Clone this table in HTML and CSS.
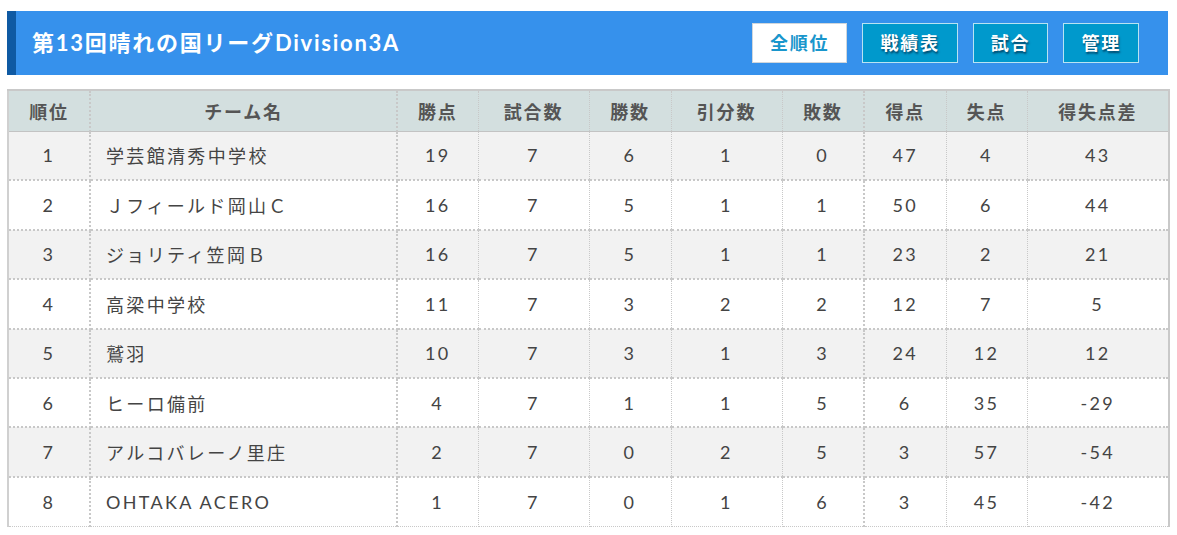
FILE: index.html
```html
<!DOCTYPE html>
<html lang="ja">
<head>
<meta charset="utf-8">
<title>第13回晴れの国リーグDivision3A</title>
<link rel="stylesheet" href="styles.css">
</head>
<body>
<div class="page">
  <header class="league-head">
    <h1 class="league-title">第13回晴れの国リーグDivision3A</h1>
    <nav class="head-nav">
      <a class="nav-btn active">全順位</a>
      <a class="nav-btn">戦績表</a>
      <a class="nav-btn">試合</a>
      <a class="nav-btn">管理</a>
    </nav>
  </header>
  <table class="standings">
    <colgroup>
      <col class="c-rank"><col class="c-team"><col class="c-pts"><col class="c-gp"><col class="c-w"><col class="c-d"><col class="c-l"><col class="c-gf"><col class="c-ga"><col class="c-gd">
    </colgroup>
    <thead>
      <tr>
        <th class="bk">順位</th><th class="bk">チーム名</th><th>勝点</th><th>試合数</th><th>勝数</th><th>引分数</th><th class="bk">敗数</th><th>得点</th><th>失点</th><th class="last">得失点差</th>
      </tr>
    </thead>
    <tbody>
      <tr><td class="bk">1</td><td class="bk team">学芸館清秀中学校</td><td>19</td><td>7</td><td>6</td><td>1</td><td class="bk">0</td><td>47</td><td>4</td><td class="last">43</td></tr>
      <tr><td class="bk">2</td><td class="bk team">Ｊフィールド岡山Ｃ</td><td>16</td><td>7</td><td>5</td><td>1</td><td class="bk">1</td><td>50</td><td>6</td><td class="last">44</td></tr>
      <tr><td class="bk">3</td><td class="bk team">ジョリティ笠岡Ｂ</td><td>16</td><td>7</td><td>5</td><td>1</td><td class="bk">1</td><td>23</td><td>2</td><td class="last">21</td></tr>
      <tr><td class="bk">4</td><td class="bk team">高梁中学校</td><td>11</td><td>7</td><td>3</td><td>2</td><td class="bk">2</td><td>12</td><td>7</td><td class="last">5</td></tr>
      <tr><td class="bk">5</td><td class="bk team">鷲羽</td><td>10</td><td>7</td><td>3</td><td>1</td><td class="bk">3</td><td>24</td><td>12</td><td class="last">12</td></tr>
      <tr><td class="bk">6</td><td class="bk team">ヒーロ備前</td><td>4</td><td>7</td><td>1</td><td>1</td><td class="bk">5</td><td>6</td><td>35</td><td class="last">-29</td></tr>
      <tr><td class="bk">7</td><td class="bk team">アルコバレーノ里庄</td><td>2</td><td>7</td><td>0</td><td>2</td><td class="bk">5</td><td>3</td><td>57</td><td class="last">-54</td></tr>
      <tr><td class="bk">8</td><td class="bk team">OHTAKA ACERO</td><td>1</td><td>7</td><td>0</td><td>1</td><td class="bk">6</td><td>3</td><td>45</td><td class="last">-42</td></tr>
    </tbody>
  </table>
</div>
</body>
</html>
```
FILE: styles.css
```css
* { box-sizing: border-box; }
html, body { margin: 0; padding: 0; background: #fff; }
body {
  font-family: "Lato", "Noto Sans CJK JP", sans-serif;
  color: #444;
}
.page {
  padding: 11px 9px 0 7px;
}
.league-head {
  height: 64px;
  background: #3691ec;
  border-left: 9px solid #0f5aa3;
  display: flex;
  align-items: center;
  justify-content: space-between;
  padding: 0 29px 0 16px;
}
.league-title {
  margin: 0;
  color: #fff;
  font-size: 22px;
  font-weight: 700;
  letter-spacing: 0.08em;
  line-height: 1;
}
.head-nav {
  display: flex;
  gap: 15px;
}
.nav-btn {
  display: block;
  height: 40px;
  line-height: 38px;
  padding: 0 17px;
  border: 1px solid #b9e3f2;
  background: #0099cc;
  color: #fff;
  font-size: 18px;
  font-weight: 700;
  letter-spacing: 0.1em;
  text-shadow: 1px 2px 2px rgba(0, 40, 70, 0.7);
  white-space: nowrap;
}
.nav-btn.active {
  background: #fff;
  color: #1996cc;
  border-color: #cfd6dc;
  text-shadow: none;
}
.standings {
  margin-top: 14px;
  width: 1161px;
  border-collapse: collapse;
  table-layout: fixed;
  border-top: 2px solid #c9c9c9;
  border-left: 2px solid #d0d0d0;
  border-right: 2px solid #c9c9c9;
}
.c-rank { width: 82px; }
.c-team { width: 307px; }
.c-pts { width: 81px; }
.c-gp { width: 111px; }
.c-w { width: 82px; }
.c-d { width: 111px; }
.c-l { width: 82px; }
.c-gf { width: 82px; }
.c-ga { width: 81px; }
.c-gd { width: 142px; }
.standings th {
  height: 41px;
  background: #d3dfdf;
  color: #555;
  font-size: 18px;
  font-weight: 700;
  letter-spacing: 0.1em;
  text-align: center;
  border-right: 1px dotted #c8c8c8;
  border-bottom: 1px solid #c3c3c3;
  padding: 0;
}
.standings td {
  height: 49.4px;
  font-size: 18px;
  letter-spacing: 0.13em;
  text-align: center;
  padding: 0;
  border-right: 1px dotted #c8c8c8;
  border-bottom: 2px dotted #c8c8c8;
  color: #444;
}
.standings th.bk, .standings td.bk { border-right: 2px dotted #c8c8c8; }
.standings th.last, .standings td.last { border-right: 2px solid #c9c9c9; }
.standings td.team { text-align: left; padding-left: 15px; }
.standings tbody tr:nth-child(odd) td { background: #f2f2f2; }
.standings tbody tr:nth-child(even) td { background: #fff; }
.standings tbody tr:last-child td { border-bottom: 1px dotted #c8c8c8; }
```
